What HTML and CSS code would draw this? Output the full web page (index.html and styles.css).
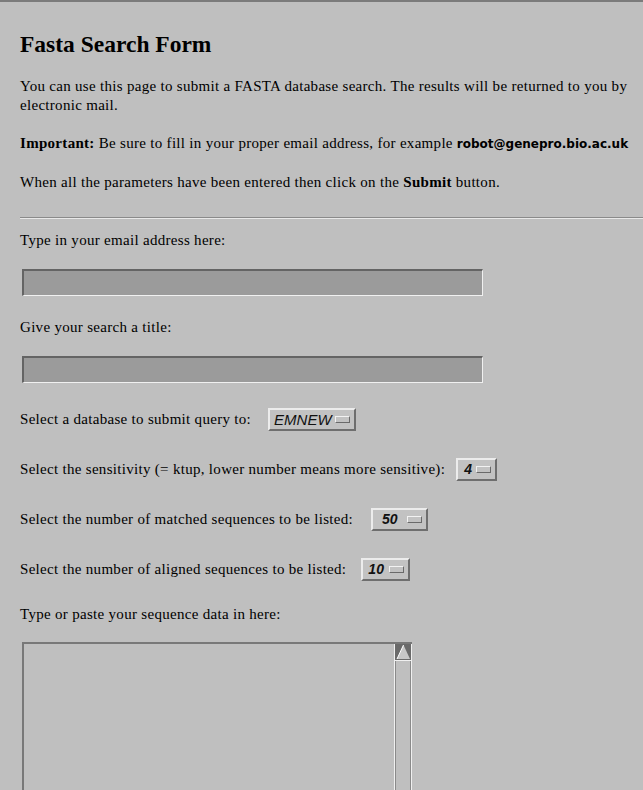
FILE: index.html
```html
<!DOCTYPE html>
<html>
<head>
<meta charset="utf-8">
<link rel="stylesheet" href="styles.css">
</head>
<body>
<div class="page">
  <h1 class="title">Fasta Search Form</h1>
  <p class="para intro">You can use this page to submit a FASTA database search. The results will be returned to you by electronic mail.</p>
  <p class="para"><b>Important:</b> Be sure to fill in your proper email address, for example <b class="addr">robot@genepro.bio.ac.uk</b></p>
  <p class="para">When all the parameters have been entered then click on the <b>Submit</b> button.</p>
  <hr class="rule">
  <form class="form">
    <p class="label">Type in your email address here:</p>
    <div class="field"></div>
    <p class="label">Give your search a title:</p>
    <div class="field"></div>
    <div class="row"><span class="label-inline db">Select a database to submit query to:</span><span class="select w-db">EMNEW<i class="ind"></i></span></div>
    <div class="row"><span class="label-inline sens">Select the sensitivity (= ktup, lower number means more sensitive):</span><span class="select w-4">4<i class="ind"></i></span></div>
    <div class="row"><span class="label-inline match">Select the number of matched sequences to be listed:</span><span class="select w-50">50<i class="ind"></i></span></div>
    <div class="row"><span class="label-inline align">Select the number of aligned sequences to be listed:</span><span class="select w-10">10<i class="ind"></i></span></div>
    <p class="label">Type or paste your sequence data in here:</p>
    <div class="textarea">
      <div class="ta-body"></div>
      <div class="scroll">
        <div class="arrow"><svg width="15" height="16" viewBox="0 0 15 16"><polygon points="7.5,1 14,15 1,15" fill="#c8c8c8"/><polyline points="1,15 7.5,1" stroke="#ffffff" stroke-width="1" fill="none"/></svg></div>
        <div class="track"></div>
      </div>
    </div>
  </form>
</div>
</body>
</html>
```
FILE: styles.css
```css
html, body {
  margin: 0;
  padding: 0;
  background: #bfbfbf;
}
html { overflow: hidden; }
body {
  border-top: 2px solid #7b7b7b;
  font-family: "Liberation Serif", "Times New Roman", serif;
  font-size: 15px;
  letter-spacing: 0.3px;
  color: #000;
}
.page {
  padding: 27px 0 0 20px;
}
.title {
  margin: 0 0 18px 0;
  font-size: 23.5px;
  font-weight: bold;
  line-height: 30px;
  letter-spacing: 0;
}
.para {
  margin: 0 6px 19px 0;
  line-height: 19px;
}
.addr {
  font-family: "DejaVu Sans", sans-serif;
  font-size: 12px;
  letter-spacing: 0;
}
.rule {
  margin: 25px 0 0 0;
  border: 0;
  height: 0;
  border-top: 1px solid #8a8a8a;
  border-bottom: 1px solid #e8e8e8;
}
.form {
  margin: 0;
}
.label {
  margin: 12px 0 0 0;
  line-height: 19px;
}
.field {
  margin: 19px 0 0 2px;
  width: 458px;
  height: 24px;
  background: #9b9b9b;
  border-top: 2px solid #646464;
  border-left: 2px solid #646464;
  border-right: 1px solid #f0f0f0;
  border-bottom: 1px solid #f0f0f0;
}
.field + .label { margin-top: 22px; }
.row {
  display: flex;
  align-items: center;
  height: 24px;
  margin-top: 26px;
}
.field + .row { margin-top: 24px; }
.label-inline {
  line-height: 19px;
}
.db { margin-right: 17px; }
.sens { margin-right: 11px; }
.match { margin-right: 18px; }
.align { margin-right: 15px; }
.select {
  display: inline-flex;
  align-items: center;
  justify-content: space-between;
  box-sizing: border-box;
  height: 23px;
  padding: 0 4px 0 6px;
  font-family: "Liberation Sans", Arial, sans-serif;
  font-style: italic;
  font-weight: bold;
  font-size: 14px;
  letter-spacing: 0;
  color: #111;
  background: #c2c2c2;
  border-top: 2px solid #ececec;
  border-left: 2px solid #ececec;
  border-right: 2px solid #6e6e6e;
  border-bottom: 2px solid #6e6e6e;
}
.select.w-db { width: 88px; font-weight: normal; font-size: 15px; padding-left: 4px; }
.select.w-4 { width: 41px; padding-left: 6px; }
.select.w-50 { width: 57px; padding-left: 9px; }
.select.w-10 { width: 49px; padding-left: 5px; }
.ind {
  display: block;
  box-sizing: border-box;
  width: 15px;
  height: 7px;
  background: #c2c2c2;
  border-top: 1px solid #f2f2f2;
  border-left: 1px solid #f2f2f2;
  border-right: 1px solid #6a6a6a;
  border-bottom: 1px solid #6a6a6a;
}
.row + .label { margin-top: 24px; }
.textarea {
  box-sizing: border-box;
  margin: 18px 0 0 2px;
  width: 390px;
  height: 148px;
  display: flex;
  border-top: 2px solid #787878;
  border-left: 2px solid #787878;
}
.ta-body {
  flex: 1;
}
.scroll {
  width: 16px;
  display: flex;
  flex-direction: column;
  border-left: 1px solid #f0f0f0;
  border-right: 1px solid #f0f0f0;
}
.arrow {
  height: 16px;
  background: #6a6a6a;
  border-bottom: 1px solid #f0f0f0;
  line-height: 0;
}
.arrow svg { display: block; margin: 0 0 0 1px; }
.track {
  flex: 1;
  border-left: 1px solid #8a8a8a;
  border-right: 1px solid #8a8a8a;
}
```
